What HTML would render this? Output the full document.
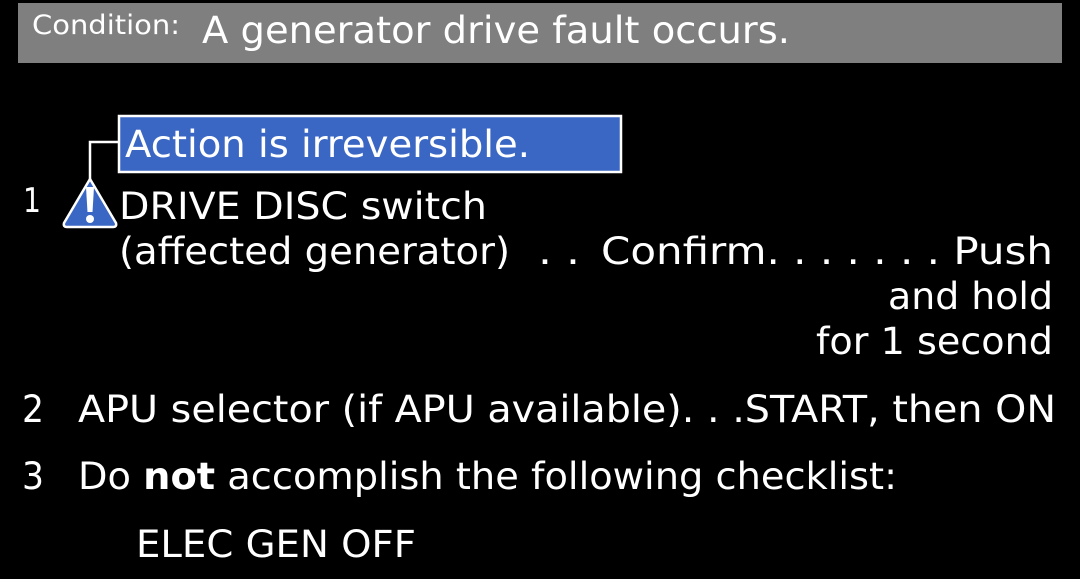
<!DOCTYPE html>
<html><head><meta charset="utf-8"><style>
html,body{margin:0;padding:0;background:#000;width:1080px;height:579px;overflow:hidden}
svg text{font-family:"DejaVu Sans","Liberation Sans",sans-serif;fill:#fff}
</style></head><body>
<svg width="1080" height="579" viewBox="0 0 1080 579" xmlns="http://www.w3.org/2000/svg">
<rect x="18" y="3" width="1044" height="60" fill="#7f7f7f"/>
<text x="32" y="34" font-size="27" textLength="148" lengthAdjust="spacingAndGlyphs">Condition:</text>
<text x="202" y="43" font-size="37" textLength="588" lengthAdjust="spacingAndGlyphs">A generator drive fault occurs.</text>
<rect x="119" y="116" width="502" height="56" fill="#3b67c4" stroke="#fff" stroke-width="2.5"/>
<text x="125" y="157" font-size="37" textLength="405" lengthAdjust="spacingAndGlyphs">Action is irreversible.</text>
<polyline points="118,142 90,142 90,180" fill="none" stroke="#fff" stroke-width="2.5"/>
<path d="M90,179 L116,223 Q117,227 113,227 L67,227 Q63,227 64,223 Z" fill="#3b67c4" stroke="#fff" stroke-width="2.5" stroke-linejoin="round"/>
<path d="M86,187 L94,187 L92.5,212 L87.5,212 Z" fill="#fff"/>
<circle cx="90" cy="219" r="4" fill="#fff"/>
<text x="23" y="212" font-size="34" textLength="18" lengthAdjust="spacingAndGlyphs">1</text>
<text x="119" y="219" font-size="37" textLength="368" lengthAdjust="spacingAndGlyphs">DRIVE DISC switch</text>
<text x="119" y="264" font-size="37" textLength="391" lengthAdjust="spacingAndGlyphs">(affected generator)</text>
<text x="538" y="264" font-size="37" textLength="42" lengthAdjust="spacingAndGlyphs">. .</text>
<text x="601" y="264" font-size="37" textLength="452" lengthAdjust="spacingAndGlyphs">Confirm. . . . . . .  Push</text>
<text x="888" y="309" font-size="37" textLength="165" lengthAdjust="spacingAndGlyphs">and hold</text>
<text x="816" y="354" font-size="37" textLength="237" lengthAdjust="spacingAndGlyphs">for 1 second</text>
<text x="22" y="422" font-size="37" textLength="22" lengthAdjust="spacingAndGlyphs">2</text>
<text x="78" y="422" font-size="37" textLength="978" lengthAdjust="spacingAndGlyphs">APU selector (if APU available). . .START, then ON</text>
<text x="22" y="489" font-size="37" textLength="22" lengthAdjust="spacingAndGlyphs">3</text>
<text x="78" y="489" font-size="37" textLength="819" lengthAdjust="spacingAndGlyphs">Do <tspan font-weight="bold">not</tspan> accomplish the following checklist:</text>
<text x="136" y="557" font-size="37" textLength="280" lengthAdjust="spacingAndGlyphs">ELEC GEN OFF</text>
</svg>
</body></html>
